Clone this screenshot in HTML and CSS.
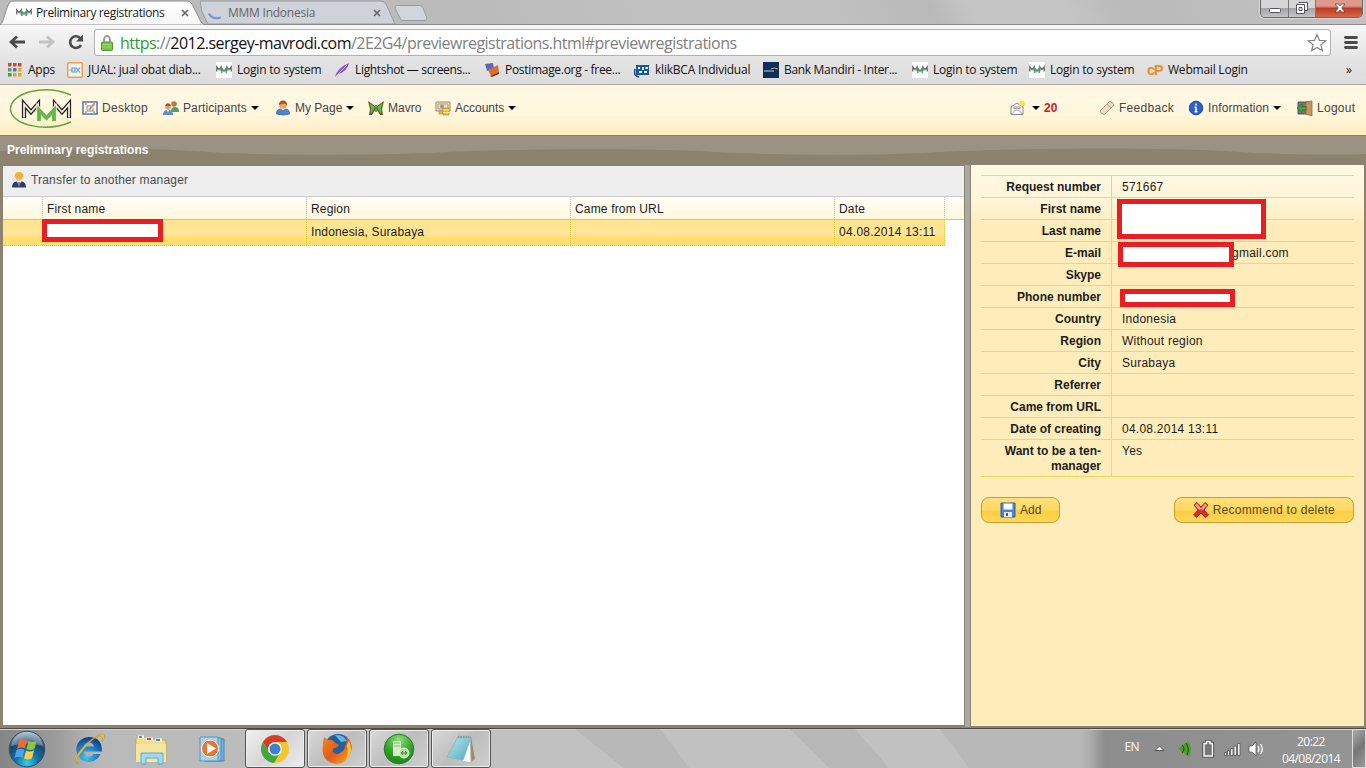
FILE: index.html
```html
<!DOCTYPE html>
<html lang="en">
<head>
<meta charset="utf-8">
<title>Preliminary registrations</title>
<link rel="stylesheet" href="styles.css">
</head>
<body>
<svg class="defs" width="0" height="0">
  <defs>
    <linearGradient id="gTab" x2="0" y2="1"><stop stop-color="#fff"/><stop offset="1" stop-color="#f6f6f6"/></linearGradient>
    <radialGradient id="gOrb" cx=".5" cy=".9" r=".9"><stop stop-color="#35d0ef"/><stop offset=".35" stop-color="#1573ac"/><stop offset=".7" stop-color="#1b4468"/><stop offset="1" stop-color="#9fb8c8"/></radialGradient>
    <radialGradient id="gIe" cx=".4" cy=".8" r=".8"><stop stop-color="#41c5f4"/><stop offset=".6" stop-color="#1c77bd"/><stop offset="1" stop-color="#0d3c7c"/></radialGradient>
    <radialGradient id="gGreen" cx=".5" cy=".2" r=".9"><stop stop-color="#8fe07c"/><stop offset=".5" stop-color="#35a52b"/><stop offset="1" stop-color="#157c12"/></radialGradient>
    <linearGradient id="gFox" x2="1" y2="1"><stop stop-color="#f08a22"/><stop offset=".5" stop-color="#e25a1b"/><stop offset="1" stop-color="#f6b02a"/></linearGradient>
    <linearGradient id="gPad" x2="1" y2="1"><stop stop-color="#bfe9ef"/><stop offset="1" stop-color="#4aa9bd"/></linearGradient>
    <symbol id="mmm" viewBox="0 0 16 16"><rect width="16" height="16" fill="#fff"/><path d="M.8 9.500V5l2.200 2.500L5.200 5v4.500M10.800 9.500V5L13 7.500 15.200 5v4.500" fill="none" stroke="#777" stroke-width="1.500"/><path d="M5.800 11V6.500L8 9l2.200-2.500V11" fill="none" stroke="#4b9a6c" stroke-width="1.500"/></symbol>
    <symbol id="x" viewBox="0 0 8 8"><path d="M1 1l6 6M7 1L1 7" stroke="#666" stroke-width="1.700"/></symbol>
  </defs>
</svg>

<div class="tabstrip">
  <div class="tab tab-active">
    <svg class="tab-shape" width="207" height="25" viewBox="0 0 207 25"><path d="M0 25C4 23 6 6 10 2Q11 1 14 1H187Q190 1 192 4L201 22Q203 25 207 25Z" fill="url(#gTab)" stroke="#8e8e8e"/></svg>
    <svg class="tab-icon" width="16" height="16"><use href="#mmm"/></svg>
    <span class="tab-text t-prelim">Preliminary registrations</span>
    <svg class="tab-x" width="8" height="8"><use href="#x"/></svg>
  </div>
  <div class="tab tab-idle">
    <svg class="tab-shape" width="196" height="24" viewBox="0 0 196 24"><path d="M0 1H180Q184 1 186 4L195 24H8L2 12Z" fill="#cfd3d9" stroke="#969ba1"/></svg>
    <svg class="tab-icon" width="16" height="16"><path d="M2 8.500Q5 15 14 12.500" fill="none" stroke="#6d9bd2" stroke-width="2.300"/></svg>
    <span class="tab-text t-indo">MMM Indonesia</span>
    <svg class="tab-x" width="8" height="8"><use href="#x"/></svg>
  </div>
  <svg class="newtab" width="34" height="16" viewBox="0 0 34 16"><path d="M3 .5H25Q28 .5 29 3L33 13Q33 15.500 30 15.500H9Q7 15.500 6 13L1 3Q1 .5 3 .5Z" fill="#d2d6db" stroke="#969ba1"/></svg>
  <div class="winbtns">
    <span class="wb"><svg width="27" height="17"><rect x="8.500" y="8.500" width="11" height="4" rx="1" fill="#fff" stroke="#555"/></svg></span>
    <span class="wb"><svg width="26" height="17"><path d="M9.500 2.500h9v8h-2.500M7.500 4.500h8v9h-8zM10 7.500h3v3h-3z" fill="#fff" stroke="#555"/></svg></span>
    <span class="wb wb-close"><svg width="46" height="17"><path d="M19 4h3.500L24 6l1.500-2H29l-3.300 4L29 12h-3.500L24 10l-1.500 2H19l3.300-4z" fill="#fff" stroke="#6b3a36" stroke-width=".8"/></svg></span>
  </div>
</div>

<div class="toolbar">
  <svg width="94" height="30" viewBox="0 0 94 30"><path d="M25 13H12M17 7.500L11 13l6 5.500" fill="none" stroke="#4b4b4b" stroke-width="2.800"/><path d="M39 13h13M47 7.500l6 5.500-6 5.500" fill="none" stroke="#c2c2c2" stroke-width="2.800"/><path d="M80.500 9.500A5.800 5.800 0 1 0 81 16" fill="none" stroke="#4b4b4b" stroke-width="2.600"/><path d="M83 5.500v7h-7z" fill="#4b4b4b"/></svg>
  <div class="urlbox">
    <svg width="14" height="18" viewBox="0 0 14 18"><path d="M4 9V5.500a3 3.500 0 0 1 6 0V9" fill="none" stroke="#999" stroke-width="1.800"/><rect x="1.500" y="8" width="11" height="8.500" rx="1" fill="#79c34b" stroke="#4e9a2c"/><path d="M2.500 10.500h9M2.500 13h9" stroke="#9cdb73"/></svg>
    <span class="url"><span class="u-https">https</span>://<span class="u-host">2012.sergey-mavrodi.com</span>/2E2G4/previewregistrations.html#previewregistrations</span>
    <svg class="star" width="20" height="20" viewBox="0 0 20 20"><path d="M10 1.500l2.400 5.800 6.300.4-4.800 4 1.500 6.100-5.400-3.300-5.400 3.300 1.500-6.100-4.800-4 6.300-.4z" fill="#fff" stroke="#858585" stroke-width="1.200"/></svg>
  </div>
  <svg width="35" height="30" viewBox="0 0 35 30"><path d="M14.500 8.500h11M14.500 13.500h11M14.500 18.500h11" stroke="#4b4b4b" stroke-width="2.800" stroke-linecap="round"/></svg>
</div>

<div class="bookmarks">
  <span class="bm"><svg width="14" height="14" viewBox="0 0 14 14"><path d="M0 0h3.500v3.500H0zM5 0h3.500v3.500H5zM10 0h3.500v3.500H10z" fill="#d0473d"/><path d="M0 5h3.500v3.500H0z" fill="#55a35f"/><path d="M5 5h3.500v3.500H5z" fill="#3d78c9"/><path d="M10 5h3.500v3.500H10zM5 10h3.500v3.500H5zM10 10h3.500v3.500H10z" fill="#e2a52d"/><path d="M0 10h3.500v3.500H0z" fill="#4a9b56"/></svg><span class="b-apps">Apps</span></span>
  <span class="bm"><svg width="16" height="16" viewBox="0 0 16 16"><rect x=".8" y=".8" width="14.400" height="14.400" rx="1" fill="#f3f6f8" stroke="#f0a03e" stroke-width="1.500"/><path d="M2.500 8H5M5 6h3v4H5zM9 5.500l4 5M13 5.500l-4 5" fill="none" stroke="#5b9dc9" stroke-width="1.200"/></svg><span class="b-jual">JUAL: jual obat diab...</span></span>
  <span class="bm"><svg width="16" height="16"><use href="#mmm"/></svg><span class="b-login">Login to system</span></span>
  <span class="bm"><svg width="16" height="16" viewBox="0 0 16 16"><path d="M1 15Q3 6 15 1Q13 10 4 12z" fill="#8a5bb5"/><path d="M1 15L13 3" stroke="#c9a8e0"/></svg><span class="b-light">Lightshot — screens...</span></span>
  <span class="bm"><svg width="16" height="16" viewBox="0 0 16 16"><path d="M1 2l8-1 1 6-7 2z" fill="#5c69b8"/><path d="M4 8l10-5 1 7-8 4z" fill="#d9702c"/><path d="M6 14l9-4v2l-7 3z" fill="#7a3a1d"/></svg><span class="b-post">Postimage.org - free...</span></span>
  <span class="bm"><svg width="16" height="16" viewBox="0 0 16 16"><path d="M2 3h13v10H2z" fill="#155a9c"/><path d="M4 5h2v2H4zM8 5h2v3H8zM11.500 5H14v2h-2.500zM5 9h3v2H5zM10 9h3v2h-3z" fill="#e4f2fb"/><path d="M1 7Q-1 14 5 15" fill="none" stroke="#24357e" stroke-width="1.500"/></svg><span class="b-bca">klikBCA Individual</span></span>
  <span class="bm"><svg width="16" height="16" viewBox="0 0 16 16"><rect width="16" height="16" fill="#0c2f5e"/><path d="M1 9h10" stroke="#c7d1dd"/><path d="M8 7q3-2 7 0" fill="none" stroke="#d6b23c"/></svg><span class="b-bank">Bank Mandiri - Inter...</span></span>
  <span class="bm"><svg width="16" height="16"><use href="#mmm"/></svg><span class="b-login">Login to system</span></span>
  <span class="bm"><svg width="16" height="16"><use href="#mmm"/></svg><span class="b-login">Login to system</span></span>
  <span class="bm"><b class="cp">cP</b><span class="b-web">Webmail Login</span></span>
  <span class="bm">»</span>
</div>

<div class="nav">
  <svg class="logo" width="72" height="50" viewBox="0 0 72 50"><path d="M71 10C45-1 11 7 10.500 24C11 40 45 48 71 37" fill="none" stroke="#5da83c" stroke-width="1.500"/><path d="M24 33V19l7 8 7-8v4M55 23v-4l7 8 7-8v14" fill="none" stroke="#222" stroke-width="4.200"/><path d="M24 32.500V19l7 8 7-8v3.500M55 22.500V19l7 8 7-8v13.500" fill="none" stroke="#fff6dd" stroke-width="1.700"/><path d="M39 36V25l7.500 8 7.500-8v11" fill="none" stroke="#fff6dd" stroke-width="5.500"/><path d="M39 36V25l7.500 8 7.500-8v11" fill="none" stroke="#63b848" stroke-width="3.800"/></svg>
  <a class="n-desktop"><svg width="16" height="16" viewBox="0 0 16 16"><rect x="1" y="2" width="14" height="12" fill="#fff" stroke="#44638c" stroke-width="1.300"/><path d="M3 4h2M11 4h2M3 12h2M11 12h2" stroke="#4577bd"/><path d="M5 11V6h4M5 11h6V8" fill="none" stroke="#888"/><path d="M7 10l5-6" stroke="#c49a5b" stroke-width="2"/></svg><span>Desktop</span></a>
  <a class="n-part"><svg width="16" height="16" viewBox="0 0 16 16"><circle cx="11" cy="4" r="2.800" fill="#bd7c45"/><path d="M8 11q0-4 4-4t4 5H9z" fill="#50a06c"/><circle cx="5" cy="7" r="2.800" fill="#dfa36e"/><path d="M2 6q1-4 5-2l1 2z" fill="#8a5a2f"/><path d="M0 15q0-5 5-5t5 5z" fill="#5b8ec9"/><path d="M4 10l1 3 1-3" fill="#fff"/></svg><span>Participants</span><i class="caret"></i></a>
  <a class="n-page"><svg width="16" height="16" viewBox="0 0 16 16"><circle cx="7" cy="5" r="3.800" fill="#e6a36a"/><path d="M3 5q0-4.500 4-4.500T11 5Q7 2 3 5" fill="#a3581f"/><path d="M.5 14q0-5 4-5l2.500 2 2.500-2q4 0 4 5-6 2-13 0z" fill="#4b86cf" stroke="#2e5f9e" stroke-width=".7"/></svg><span>My Page</span><i class="caret"></i></a>
  <a class="n-mavro"><svg width="16" height="16" viewBox="0 0 16 16"><path d="M0 1l7 5v4l-3 5H1l1-6z" fill="#7c4a1c"/><path d="M16 1L9 6v4l3 5h3l-1-6z" fill="#7c4a1c"/><path d="M1.500 3l5.500 4-3.500 6.500-1-1 .5-4zM14.500 3L9 7l3.500 6.500 1-1-.5-4z" fill="#51c14c"/><path d="M8 5v7" stroke="#1f6a25" stroke-width="1.400"/></svg><span>Mavro</span></a>
  <a class="n-acc"><svg width="16" height="16" viewBox="0 0 16 16"><path d="M1 2h14v9H1z" fill="#eadfc4" stroke="#a28d66"/><path d="M3 4h10v5H3z" fill="none" stroke="#b5a37d"/><circle cx="7" cy="6.500" r="2" fill="#a39679"/><path d="M8 8h6v7H8zM4 11h4v3H4z" fill="#e8b94b" stroke="#b08430" stroke-width=".6"/><path d="M8 10h6M8 12.500h6" stroke="#fbe39a"/></svg><span>Accounts</span><i class="caret"></i></a>
  <a class="n-mail"><svg width="16" height="16" viewBox="0 0 16 16"><path d="M1 7l6-4 6 4v7.500H1z" fill="#fff" stroke="#888"/><path d="M1.500 14l4-4h3l4 4M4 9V7h6v2L7 8z" fill="none" stroke="#999"/><circle cx="12" cy="3.500" r="2.800" fill="#f3e43f"/></svg><i class="caret"></i><b>20</b></a>
  <a class="n-feed"><svg width="16" height="16" viewBox="0 0 16 16"><path d="M1 11L11 1l1 1.500 1.500 0L15 5 5 15l-1-1.500-1.500.2z" fill="#eedcca" stroke="#b69c85"/><path d="M8 4l4 4" stroke="#b69c85"/></svg><span>Feedback</span></a>
  <a class="n-info"><svg width="16" height="16" viewBox="0 0 16 16"><circle cx="7" cy="8" r="6.800" fill="#2d5fc4" stroke="#2049a0"/><path d="M7 3.500v2M7 6.800V12M5.500 11.700h3M5.500 7.200h1.500" stroke="#fff" stroke-width="1.600"/></svg><span>Information</span><i class="caret"></i></a>
  <a class="n-out"><svg width="16" height="16" viewBox="0 0 16 16"><path d="M1 2h10v12H1z" fill="#777" stroke="#555"/><path d="M9 2l6-1v15l-6-2z" fill="#c9935a" stroke="#8f602f" stroke-width=".7"/><path d="M0 8l5-4v2.500h4v3.500H5v2.500z" fill="#41a73c" stroke="#226b22" stroke-width=".6"/></svg><span>Logout</span></a>
</div>

<div class="titlebar">
  <svg class="wave" width="1366" height="30" viewBox="0 0 1366 30"><path d="M0 0H1366V18C1335 19 1290 19 1240 16C1150 10 1000 13 940 16C870 20 780 20 700 15C620 12 500 13 430 17C370 19 270 20 210 16C140 11 60 12 0 15Z" fill="#9b9382"/></svg>
  <span>Preliminary registrations</span>
</div>

<div class="main">
  <div class="left">
    <div class="actions"><svg width="16" height="16" viewBox="0 0 16 16"><circle cx="8" cy="5" r="3.500" fill="#eab074"/><path d="M3.500 5q0-5 4.500-5t4.500 5z" fill="#eeb62b"/><path d="M1 15.500q0-5 4-6l3 1 3-1q4 1 4 6z" fill="#2d3d5e"/><path d="M6 9h4l-2 6z" fill="#fff"/><path d="M8 10v4" stroke="#324d91" stroke-width="1.300"/></svg><span>Transfer to another manager</span></div>
    <div class="row head"><span></span><span>First name</span><span>Region</span><span>Came from URL</span><span>Date</span><span></span></div>
    <div class="row sel"><span></span><span><i class="redact r-row"></i></span><span>Indonesia, Surabaya</span><span></span><span class="date">04.08.2014 13:11</span></div>
  </div>
  <div class="splitter"></div>
  <div class="right">
    <dl class="details">
      <dt>Request number</dt><dd>571667</dd>
      <dt>First name</dt><dd><i class="redact r-name"></i></dd>
      <dt>Last name</dt><dd></dd>
      <dt>E-mail</dt><dd class="mail"><i class="redact r-mail"></i>gmail.com</dd>
      <dt>Skype</dt><dd></dd>
      <dt>Phone number</dt><dd><i class="redact r-phone"></i></dd>
      <dt>Country</dt><dd>Indonesia</dd>
      <dt>Region</dt><dd>Without region</dd>
      <dt>City</dt><dd>Surabaya</dd>
      <dt>Referrer</dt><dd></dd>
      <dt>Came from URL</dt><dd></dd>
      <dt>Date of creating</dt><dd>04.08.2014 13:11</dd>
      <dt>Want to be a ten-<br>manager</dt><dd>Yes</dd>
    </dl>
    <div class="buttons">
      <button class="btn"><svg width="16" height="16" viewBox="0 0 16 16"><path d="M1 1h14v14H1z" fill="#4d83cd" stroke="#2e5ea6"/><path d="M3.500 1.500h9v6h-9z" fill="#fff"/><path d="M4 10h8v5H4z" fill="#e3ebf5"/><path d="M6 11h2v3H6z" fill="#345c98"/></svg>Add</button>
      <button class="btn"><svg width="16" height="16" viewBox="0 0 16 16"><path d="M1 3l3-2.500L8 5l4-4.500L15 3l-4 5 4.500 5-3 2.500L8 11l-4.500 4.500-3-2.500L5 8z" fill="#d92b2b" stroke="#a51717" stroke-width=".8"/><path d="M2 3l2-1.500 4 5 4-5L14 3l-3.500 4.500h-5z" fill="#f3a1a0"/></svg>Recommend to delete</button>
    </div>
  </div>
</div>

<div class="taskbar">
  <svg class="sheen" width="1366" height="40"><path d="M575 0L660 0 690 40H625zM790 0H855L890 40H830zM940 0H1090V40H970z" fill="#b0b0b0"/></svg>
  <span class="pin"><svg width="40" height="40" viewBox="0 0 40 40"><circle cx="20" cy="20" r="17.800" fill="url(#gOrb)" stroke="#325069"/><path d="M4 17Q8 3 20 3T36 17Q20 12 4 17" fill="#fff" opacity=".3"/><path d="M12 12q4-2.500 8-.5l-2 8q-4-2-8 .5z" fill="#ef6a32"/><path d="M21.500 12q4 2 8-.3l-2 8q-4 2.300-8 .3z" fill="#8fc63e"/><path d="M9.500 21q4-2.300 8-.3l-2 8q-4-2.200-8 .3z" fill="#4aa5e4"/><path d="M19 21.500q4 2 8-.3l-2 8q-4 2.300-8 .3z" fill="#fbd03c"/></svg></span>
  <span class="pin"><svg width="36" height="36" viewBox="0 0 36 36"><path d="M18 6a12.500 12.500 0 1 0 11.500 17h-7q-1.500 2.500-4.500 2.500-4.500 0-5-5h18Q31 6 18 6zM13 15.500q1-4 5-4t5 4z" fill="url(#gIe)"/><path d="M7 33Q-1 30 14 14Q26 3 32 3Q36 4 31 11Q33 6 29 5Q22 6 12 19Q3 30 7 33" fill="#edbf45" stroke="#c39223" stroke-width=".6"/></svg></span>
  <span class="pin"><svg width="36" height="36" viewBox="0 0 36 36"><path d="M3 8q0-2 2-2h8l2 2h6l2 1h10v20H3z" fill="#f4dd88" stroke="#c9a94b"/><path d="M5 6h6M13 8h7M22 9h7" stroke="#fff" stroke-width="3"/><path d="M6 6h3" stroke="#4caf3d" stroke-width="2"/><path d="M14 8h4" stroke="#d84335" stroke-width="2"/><path d="M23 9h4" stroke="#478ed1" stroke-width="2"/><path d="M3 13h30v18H3z" fill="#f6e59d"/><path d="M8 33V22h22v11h-5v-6H13v6z" fill="#a3d9ef" stroke="#5ba9cc"/></svg></span>
  <span class="pin"><svg width="36" height="36" viewBox="0 0 36 36"><path d="M14 7l16 1v22H14z" fill="#76b2d9" stroke="#4484ae"/><path d="M11 7h16v23H11z" fill="#8fc5e5" stroke="#4888b4"/><path d="M6 6h18v24H6z" fill="#a6d2eb" stroke="#5595bf"/><circle cx="16" cy="17.500" r="8.500" fill="#e9762b" stroke="#fff"/><path d="M13 12v11l9-5.500z" fill="#fff"/></svg></span>
  <span class="task lit"><svg width="32" height="32" viewBox="0 0 32 32"><circle cx="16" cy="16" r="14" fill="#f3c62f"/><path d="M3.900 9A14 14 0 0 1 28.100 9H16a7 7 0 0 0-6.500 9z" fill="#da3a2c"/><path d="M3.900 9A14 14 0 0 0 15 30l6-10.200A7 7 0 0 1 10 19z" fill="#3ea648"/><circle cx="16" cy="16" r="6.800" fill="#fff"/><circle cx="16" cy="16" r="5.500" fill="#3f7fd0"/></svg></span>
  <span class="task"><svg width="32" height="32" viewBox="0 0 32 32"><circle cx="17" cy="14.500" r="13.500" fill="#245f9f"/><path d="M14 2q8-1 12 6l-6 1z" fill="#63b4e4"/><path d="M2 9l1-5 4 3q5-1 6 2 3 2 5 3-1 3-5 3-2 2-1 4 4 4 8 0 4-2 4-6 3-5 1-10 7 7 5 14Q27 31 15 31 2 29 1.500 17z" fill="url(#gFox)"/><path d="M28 8q5 12-3 19 3-8 1-15z" fill="#f8c93b"/></svg></span>
  <span class="task"><svg width="32" height="32" viewBox="0 0 32 32"><circle cx="16" cy="16" r="14.800" fill="url(#gGreen)" stroke="#2a7d25"/><path d="M10 8h8v15h-8z" fill="#d8edc9"/><path d="M11 10h6M11 13h6" stroke="#89b37d"/><circle cx="21" cy="20" r="5" fill="#b9e5a2" stroke="#e9f7e2"/><path d="M18 20h6M20 18l-2 2 2 2M22 18l2 2-2 2" fill="none" stroke="#38802f"/></svg></span>
  <span class="task"><svg width="34" height="32" viewBox="0 0 34 32"><path d="M27 4l4 22-4 3-4-2z" fill="#a58a5b"/><path d="M26 4l1 26-9-2z" fill="#f4fafb" stroke="#b5c5c9"/><path d="M14 4h13l-8 23-16-3z" fill="url(#gPad)" stroke="#8fb6be"/><path d="M14 4h13" stroke="#8d9698" stroke-width="2.500" stroke-dasharray="1.500 1"/></svg></span>
  <span class="tray">
    <span class="lang">EN</span>
    <svg class="trayicons" width="120" height="24" viewBox="0 0 120 24"><path d="M4 13.500l4.500-4.500 4.500 4.500z" fill="#fff" stroke="#555"/><path d="M27 12l10-8q5 8 1 16z" fill="#4e9b2e"/><path d="M31 8q4 4 0 8M35 6q4 6 1 12" stroke="#274f18" fill="none"/><path d="M55.500 4.500h3.500v2h2.500v12.500h-8.500v-12.500h2.500z" fill="none" stroke="#444" stroke-width="3.200"/><path d="M55.500 4.500h3.500v2h2.500v12.500h-8.500v-12.500h2.500z" fill="#777" stroke="#fff" stroke-width="1.400"/><path d="M73.500 15.500h2v3h-2zM76.500 13.500h2v5h-2zM79.500 11.500h2.500v7h-2.500zM83 9h2.500v9.500h-2.500zM86.500 6.500h2.500v12h-2.500z" fill="#f2f2f2" stroke="#555" stroke-width=".8"/><path d="M98 9h3l4-4v14l-4-4h-3z" fill="#fff" stroke="#555" stroke-width=".8"/><path d="M107 9q2 3 0 6M109.500 7q3.500 5 0 10" fill="none" stroke="#fff" stroke-width="1.300"/></svg>
    <span class="clock">20:22<br>04/08/2014</span>
    <span class="peek"></span>
  </span>
</div>
</body>
</html>
```
FILE: styles.css
```css
* { box-sizing: border-box; }
body { margin: 0; width: 1366px; height: 768px; overflow: hidden; font: 12px/15px "Liberation Sans", Arial, sans-serif; color: #1c1c1c; background: #8b8370; display: flex; flex-direction: column; }
svg { display: block; flex: none; }
.defs { position: absolute; }
span, a { white-space: nowrap; }

/* browser chrome */
.tabstrip { height: 25px; background: linear-gradient(64deg, #bbb 0 35%, #c1c1c1 50% 60%, #b9b9b9 68%, #c5c5c5 71% 78%, #bababa 82%, #c2c2c2); border-bottom: 1px solid #8a8a8a; display: flex; font: 12px/16px "Open Sans", sans-serif; position: relative; }
.tab { position: relative; display: flex; align-items: center; height: 25px; }
.tab-shape { position: absolute; left: 0; top: 0; }
.tab-icon, .tab-text, .tab-x { position: relative; }
.tab-active { width: 200px; padding-left: 16px; z-index: 1; }
.tab-idle { width: 194px; padding-left: 7px; color: #666; }
.tab-text { margin-left: 4px; flex: 1; }
.t-prelim { letter-spacing: -.36px; }
.t-indo { letter-spacing: -.24px; }
.tab-active .tab-x { margin-right: 11px; }
.tab-idle .tab-x { margin-right: 13px; }
.tab-idle .tab-text { margin-left: 5px; }
.newtab { margin-top: 5px; }
.winbtns { margin-left: auto; margin-right: 3px; display: flex; height: 18px; border: 1px solid #666; border-top: 0; border-radius: 0 0 5px 5px; overflow: hidden; box-shadow: 0 0 0 1px #d8d8d8; }
.wb { background: linear-gradient(#d5d5d5 45%, #a4a4a8 50%, #c5c5c8); border-right: 1px solid #777; }
.wb-close { background: linear-gradient(#dc9a8c 35%, #bd3b25 50%, #d66848); border: 0; }
.toolbar { height: 35px; background: linear-gradient(#f7f7f7, #e4e4e4); display: flex; padding-top: 4px; }
.urlbox { flex: 1; height: 27px; border: 1px solid #b1b1b1; border-radius: 3px; background: #fff; display: flex; align-items: center; padding: 0 3px 0 5px; font: 16px/24px "Open Sans", sans-serif; color: #808080; }
.url { margin-left: 6px; flex: 1; letter-spacing: -.53px; }
.u-https { color: #2f9a2c; }
.u-host { color: #111; }
.bookmarks { height: 25px; background: linear-gradient(#e3e3e3, #dcdcdc); border-bottom: 1px solid #a6a6a6; display: grid; grid-template-columns: 59px 149px 118px 150px 150px 129px 149px 117px 118px 199px 20px; padding: 0 0 4px 8px; align-items: center; font: 12px/16px "Open Sans", sans-serif; color: #111; letter-spacing: -.22px; }
.bm { display: flex; align-items: center; gap: 5px; }
.bm:first-child { gap: 6px; }
.b-light { letter-spacing: -.33px; }
.b-post { letter-spacing: -.3px; }
.b-bank { letter-spacing: -.32px; }
.cp { font: bold 15px/16px "Liberation Sans", sans-serif; color: #f08b2c; width: 16px; letter-spacing: -1.5px; }

/* site navigation */
.nav { height: 50px; background: linear-gradient(#fff5dd, #fff8e2 30%, #fff6dc 60%, #fdecc0); display: flex; color: #454545; padding-right: 10px; }
.nav a { display: flex; align-items: center; height: 46px; gap: 4px; }
.caret { border: 4px solid transparent; border-top-color: #000; border-bottom: 0; }
.n-desktop, .n-feed, .n-out { letter-spacing: .28px; }
.n-desktop { margin-left: 10px; width: 81px; }
.n-part { width: 113px; letter-spacing: .1px; }
.n-page { width: 92px; }
.n-page span { margin-left: -1px; }
.n-mavro { width: 67px; }
.n-acc { width: 575px; }
.n-mail { width: 89px; }
.n-mail b { color: #c9201c; }
.n-mail .caret { margin-left: 2px; }
.n-feed { width: 90px; }
.n-info { width: 108px; }
.n-info span { margin-left: -1px; letter-spacing: .1px; }

.titlebar { height: 30px; background: #8b8370; border-top: 1px solid #8a8167; color: #fff; font-weight: bold; position: relative; padding: 7px; }
.wave { position: absolute; left: 0; top: 0; }
.titlebar span { position: relative; }

/* panels */
.main { height: 563px; display: flex; padding-left: 3px; }
.left { width: 961px; height: 559px; margin-top: 1px; background: #fff; }
.actions { height: 31px; background: #eee; border-bottom: 1px solid #ccc; display: flex; padding: 6px 8px; gap: 4px; color: #4c4c4c; line-height: 17px; letter-spacing: .18px; }
.row { display: grid; grid-template-columns: 40px 264px 264px 264px 110px 19px; letter-spacing: .16px; }
.row > span { border-right: 1px dotted #e5c844; padding-left: 4px; }
.head { height: 23px; line-height: 25px; background: linear-gradient(#fffef8, #fff8dd); border-bottom: 1px solid #e0c35a; }
.head > span:nth-child(6) { border: 0; }
.sel { height: 26px; line-height: 25px; width: 942px; grid-template-columns: 40px 264px 264px 264px 110px; background: linear-gradient(#ffe48f, #ffe597 55%, #ffde6e 75%, #ffdf70); border-bottom: 1px dotted #e0bd43; position: relative; }
.sel .date { letter-spacing: .25px; }
.redact { position: absolute; background: #fff; border: 5px solid #e81e25; }
.r-row { left: 39px; top: -1px; width: 121px; height: 23px; }
.splitter { width: 5px; margin: -1px 1px 1px; background: #a9a8a3; }
.right { width: 393px; height: 561px; background: linear-gradient(#fff9e5, #fff5d8 35px, #feecbb 60px); padding: 10px 10px 0; }
.details { margin: 0; display: grid; grid-template-columns: 131px 1fr; border-bottom: 1px solid #f3d75f; }
.details dt, .details dd { margin: 0; border-top: 1px solid #f3d75f; padding: 4px 10px 2px; min-height: 22px; position: relative; }
.details dd { letter-spacing: .24px; }
.details dt { font-weight: bold; text-align: right; border-right: 1px solid #f3d75f; }
.details .mail { padding-left: 120px; }
.r-name { left: 5px; top: 1px; width: 149px; height: 40px; z-index: 1; }
.r-mail { left: 6px; top: 0; width: 116px; height: 25px; z-index: 1; }
.r-phone { left: 8px; top: 3px; width: 115px; height: 18px; z-index: 1; }
.buttons { display: flex; justify-content: space-between; margin-top: 20px; }
.btn { height: 26px; border: 1px solid #c79d2c; border-radius: 8px; background: linear-gradient(#ffe07b, #ffd860 50%, #fdce42 55%, #ffd75a); font: inherit; color: #53492c; display: flex; align-items: center; gap: 4px; padding: 0 18px; }
.btn:last-child { letter-spacing: .26px; }

/* desktop taskbar */
.taskbar { height: 40px; background: linear-gradient(90deg, #858585, #9b9b9b 55px, #b9b9b9 100px, #c1c1c1 500px 1080px, #8d8d8d 1105px, #949494); border-top: 1px solid #4d4a45; box-shadow: inset 0 1px #d4d4d4; display: flex; position: relative; align-items: center; padding-left: 7px; }
.sheen { position: absolute; left: 0; top: 0; opacity: .5; }
.pin, .task, .tray { position: relative; }
.pin { display: flex; justify-content: center; width: 61px; }
.pin:nth-child(2) { width: 40px; margin-right: 24px; }
.pin:nth-child(3) { width: 36px; margin-right: 26px; }
.pin:nth-child(4) { width: 36px; margin-right: 25px; }
.pin:nth-child(5) { width: 36px; margin-right: 15px; }
.task { width: 60px; height: 39px; margin-right: 2px; border: 1px solid #555; border-radius: 3px; box-shadow: inset 0 0 0 1px #eee; background: linear-gradient(135deg, #d9d9d9, #bdbdbd 50%, #cfcfcf); display: flex; align-items: center; justify-content: center; }
.lit { background: linear-gradient(135deg, #f2f2f2, #d5d5d5 50%, #ececec); }
.tray { margin-left: auto; display: flex; height: 39px; align-items: center; color: #fff; font: 12px/17px "Open Sans", sans-serif; letter-spacing: -.55px; }
.lang { margin: -4px 12px 0 0; }
.clock { width: 64px; text-align: center; margin: 2px 9px 0 8px; }
.peek { width: 14px; height: 39px; border: 1px solid #ddd; background: linear-gradient(135deg, #aaa, #777 50%, #999); }
```
